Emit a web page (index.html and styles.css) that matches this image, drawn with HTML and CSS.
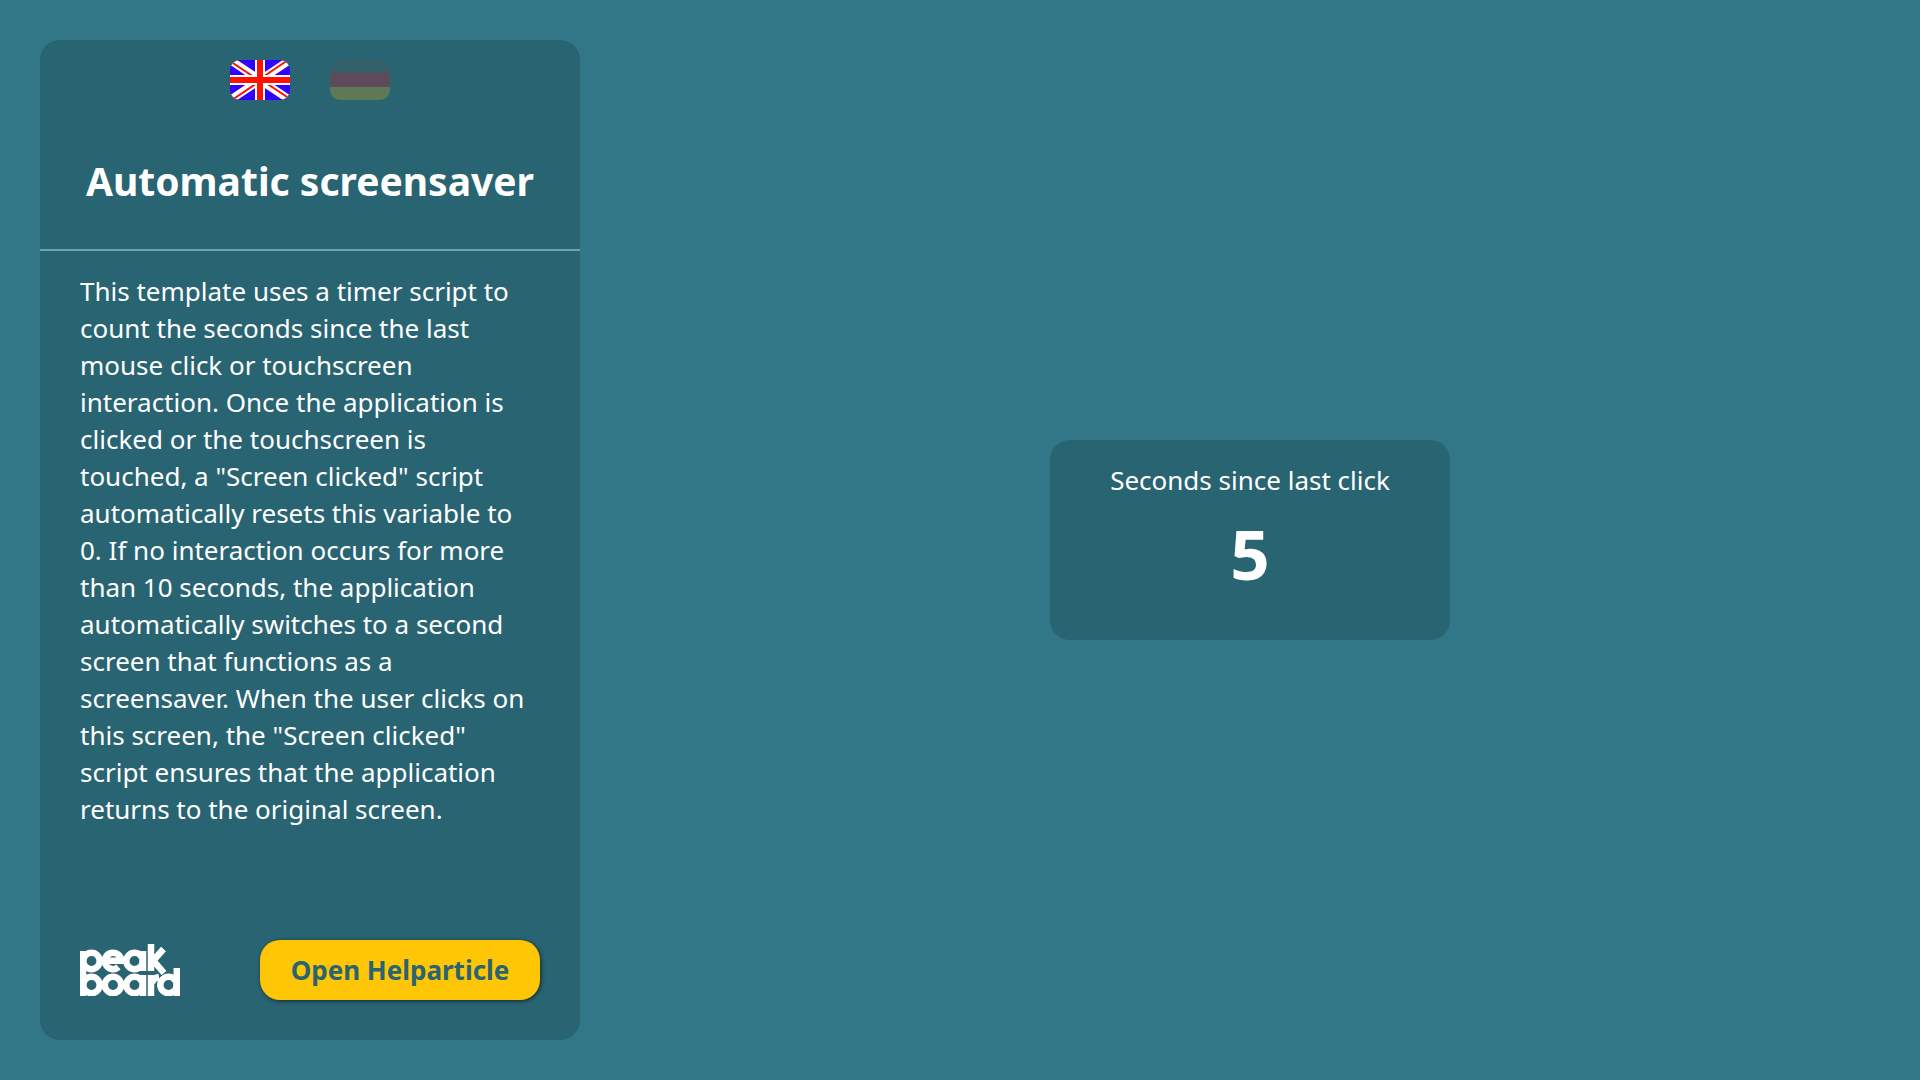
FILE: index.html
```html
<!DOCTYPE html>
<html lang="en">
<head>
<meta charset="utf-8">
<meta name="viewport" content="width=device-width, initial-scale=1">
<title>Automatic screensaver</title>
<link rel="stylesheet" href="styles.css">
</head>
<body>
<aside class="panel">
  <div class="languages">
    <button class="flag" type="button" aria-label="English" aria-pressed="true">
      <svg viewBox="0 0 60 40" aria-hidden="true">
        <rect width="60" height="40" fill="#3200ff"/>
        <path d="M0 0L60 40M60 0L0 40" stroke="#fff" stroke-width="8"/>
        <path d="M0 1L30 21M60 39L30 19M58 0L30 19M2 40L30 21" stroke="#f10" stroke-width="2"/>
        <path d="M30 0V40M0 20H60" stroke="#fff" stroke-width="10"/>
        <path d="M30 0V40M0 20H60" stroke="#f10" stroke-width="6"/>
      </svg>
    </button>
    <button class="flag flag-inactive" type="button" aria-label="Deutsch" aria-pressed="false">
      <svg viewBox="0 0 60 40" aria-hidden="true">
        <rect width="60" height="14" fill="#555"/>
        <rect y="13" width="60" height="14" fill="#ff0019"/>
        <rect y="27" width="60" height="13" fill="#ffb300"/>
      </svg>
    </button>
  </div>
  <h1 class="title">Automatic screensaver</h1>
  <p class="description">This template uses a timer script to count the seconds since the last mouse click or touchscreen interaction. Once the application is clicked or the touchscreen is touched, a "Screen clicked" script automatically resets this variable to 0. If no interaction occurs for more than 10 seconds, the application automatically switches to a second screen that functions as a screensaver. When the user clicks on this screen, the "Screen clicked" script ensures that the application returns to the original screen.</p>
  <footer class="panel-footer">
    <svg class="logo" viewBox="0 0 100 52" role="img" aria-label="peakboard">
      <g fill="none" stroke="#fff" stroke-width="6.5">
        <circle cx="11.5" cy="17" r="8.2"/><circle cx="54.5" cy="17" r="8.2"/>
        <path d="M25 16.8H41.2A8.2 8.2 0 1 0 38.5 23"/>
        <circle cx="11.5" cy="41" r="8.2"/><circle cx="33" cy="41" r="8.2"/>
        <circle cx="54.5" cy="41" r="8.2"/><circle cx="88.5" cy="41" r="8.2"/>
        <path d="M3 7V52M63 7V27M71 0V27M63 31V52M71 31V52M96.8 24V52M72 18L83.5 5M72 15L84 29M72 39Q73 34 79 33"/>
      </g>
    </svg>
    <button class="help" type="button">Open Helparticle</button>
  </footer>
</aside>
<main class="stage">
  <section class="counter">
    <h2 class="counter-label">Seconds since last click</h2>
    <output class="counter-value">5</output>
  </section>
</main>
</body>
</html>
```
FILE: styles.css
```css
* {
  box-sizing: border-box;
}

body {
  margin: 0;
  min-height: 100vh;
  padding: 40px;
  display: flex;
  color: #fff;
  background: #317787;
  font-family: "Segoe UI", "Noto Sans", sans-serif;
}

button {
  border: 0;
  padding: 0;
  font: inherit;
  cursor: pointer;
}

.panel {
  flex: 0 0 540px;
  display: flex;
  flex-direction: column;
  border-radius: 20px;
  background: #296472;
}

.languages {
  display: flex;
  justify-content: center;
  gap: 40px;
  padding-top: 20px;
}

.flag {
  width: 60px;
  height: 40px;
  border-radius: 10px;
  overflow: hidden;
  background: none;
}

.flag svg {
  display: block;
  width: 100%;
}

.flag-inactive {
  opacity: 0.25;
}

.title {
  margin: 0;
  padding: 51px 0 38px;
  border-bottom: 2px solid #6aa5b3;
  font-size: 39px;
  line-height: 60px;
  font-weight: 700;
  text-align: center;
}

.description {
  margin: 0;
  padding: 22px 40px;
  font-size: 26px;
  line-height: 37px;
}

.panel-footer {
  display: flex;
  align-items: center;
  justify-content: space-between;
  margin-top: auto;
  padding: 0 40px 40px;
}

.logo {
  width: 100px;
  height: 52px;
}

.help {
  width: 280px;
  height: 60px;
  border-radius: 20px;
  color: #296472;
  background: #ffc605;
  box-shadow: 1px 1px 4px rgba(0, 0, 0, 0.6);
  font-size: 26px;
  font-weight: 700;
}

.stage {
  flex: 1;
  display: flex;
  align-items: center;
  justify-content: center;
  padding-left: 40px;
}

.counter {
  width: 400px;
  min-height: 200px;
  padding: 20px;
  border-radius: 20px;
  background: #296472;
  text-align: center;
}

.counter-label {
  margin: 0;
  font-size: 26px;
  line-height: 40px;
  font-weight: 400;
}

.counter-value {
  display: block;
  font-size: 69px;
  line-height: 106px;
  font-weight: 700;
}
```
